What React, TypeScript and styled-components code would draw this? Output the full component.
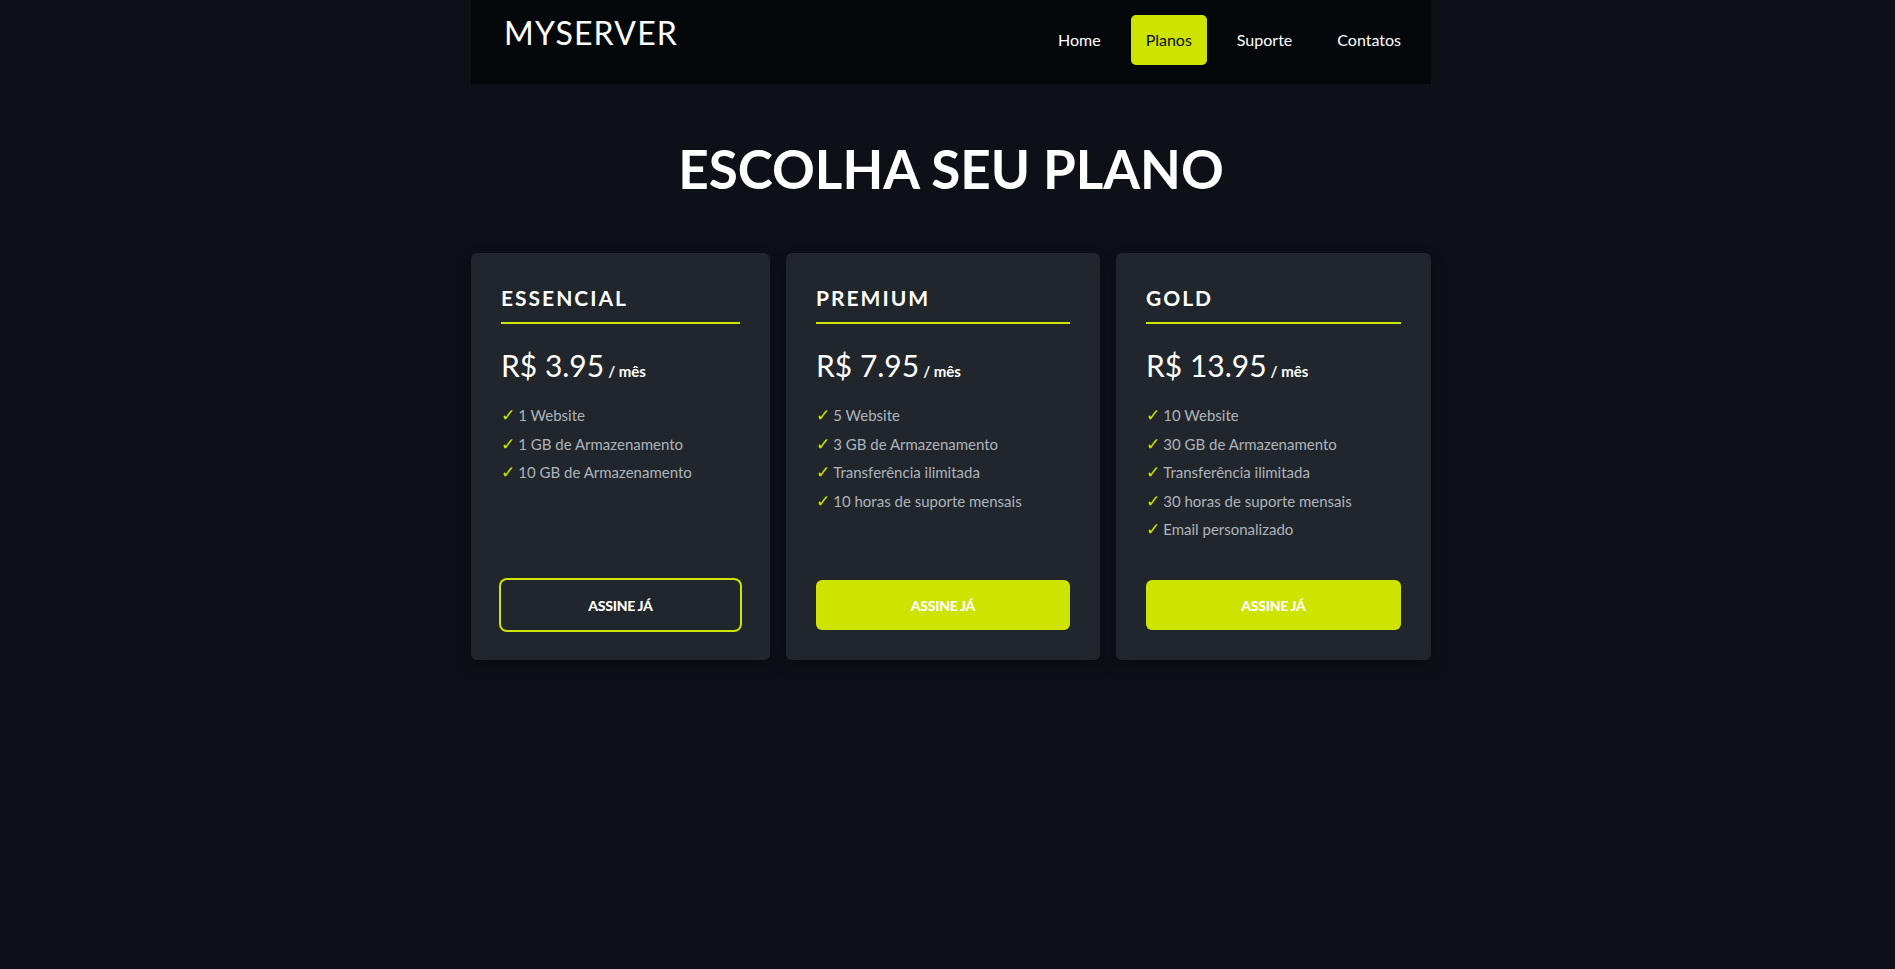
import React from "react";
import styled, { createGlobalStyle } from "styled-components";

const Global = createGlobalStyle`
  html, body { margin: 0; padding: 0; }
  body {
    background: #0d1117;
    color: #ffffff;
    font-family: Lato, "Noto Sans", sans-serif;
    min-height: 969px;
  }
  * { box-sizing: border-box; }
`;

const LIME = "#cde300";

const Page = styled.div`
  padding-left: 7px;
`;

const Container = styled.div`
  width: 960px;
  margin: 0 auto;
`;

const Header = styled.header`
  height: 84px;
  background: #05080b;
  display: flex;
  justify-content: space-between;
  align-items: flex-start;
  padding: 0 15px 0 33px;
`;

const Logo = styled.div`
  padding-top: 11px;
  font-size: 32px;
  line-height: 44px;
  letter-spacing: 1.2px;
  font-weight: 400;
  color: #fff;
`;

const Nav = styled.nav`
  display: flex;
  gap: 15px;
  padding-top: 15px;
`;

const NavLink = styled.a<{ $active?: boolean }>`
  display: block;
  height: 50px;
  line-height: 50px;
  padding: 0 15px;
  font-size: 16px;
  border-radius: 5px;
  text-decoration: none;
  color: ${(p) => (p.$active ? "#0d1117" : "#ffffff")};
  background: ${(p) => (p.$active ? LIME : "transparent")};
`;

const Title = styled.h1`
  margin: 48px 0;
  text-align: center;
  font-size: 53px;
  line-height: 73px;
  font-weight: 700;
  color: #fff;
`;

const Cards = styled.div`
  display: grid;
  grid-template-columns: 299px 314px 315px;
  gap: 16px;
`;

const Card = styled.div`
  background: #21262d;
  border-radius: 6px;
  padding: 30px;
  min-height: 407px;
  display: flex;
  flex-direction: column;
  box-shadow: 0 6px 14px rgba(0, 0, 0, 0.35);
`;

const PlanName = styled.h2`
  margin: 0;
  padding: 1px 0 10px;
  font-size: 21px;
  line-height: 28px;
  font-weight: 700;
  letter-spacing: 2px;
  border-bottom: 2px solid ${LIME};
  color: #fff;
`;

const Price = styled.div`
  margin-top: 21px;
  font-size: 30px;
  line-height: 40px;
  color: #fff;
`;

const Per = styled.span`
  font-size: 15px;
  font-weight: 700;
  margin-left: 4px;
`;

const Features = styled.ul`
  list-style: none;
  margin: 10px 0 0;
  padding: 0;
`;

const Feature = styled.li`
  padding: 3px 0;
  font-size: 15px;
  line-height: 22.5px;
  color: #adb4bb;
`;

const Check = styled.span`
  display: inline-block;
  color: ${LIME};
  margin-right: 3px;
  font-family: "DejaVu Sans", sans-serif;
  font-size: 17px;
  line-height: 1;
`;

const Button = styled.button<{ $outline?: boolean }>`
  margin-top: auto;
  width: 100%;
  height: 50px;
  border: none;
  border-radius: 6px;
  font-family: Lato, sans-serif;
  font-size: 14px;
  font-weight: 900;
  letter-spacing: -0.3px;
  color: #fff;
  cursor: pointer;
  background: ${(p) => (p.$outline ? "transparent" : LIME)};
  box-shadow: ${(p) => (p.$outline ? `0 0 0 2px ${LIME}` : "none")};
`;

const plans = [
  {
    name: "ESSENCIAL",
    price: "R$ 3.95",
    outline: true,
    features: ["1 Website", "1 GB de Armazenamento", "10 GB de Armazenamento"],
  },
  {
    name: "PREMIUM",
    price: "R$ 7.95",
    outline: false,
    features: [
      "5 Website",
      "3 GB de Armazenamento",
      "Transferência ilimitada",
      "10 horas de suporte mensais",
    ],
  },
  {
    name: "GOLD",
    price: "R$ 13.95",
    outline: false,
    features: [
      "10 Website",
      "30 GB de Armazenamento",
      "Transferência ilimitada",
      "30 horas de suporte mensais",
      "Email personalizado",
    ],
  },
];

export default function App() {
  return (
    <Page>
      <Global />
      <Container>
        <Header>
          <Logo>MYSERVER</Logo>
          <Nav>
            <NavLink href="#">Home</NavLink>
            <NavLink href="#" $active>
              Planos
            </NavLink>
            <NavLink href="#">Suporte</NavLink>
            <NavLink href="#">Contatos</NavLink>
          </Nav>
        </Header>
        <Title>ESCOLHA SEU PLANO</Title>
        <Cards>
          {plans.map((p) => (
            <Card key={p.name}>
              <PlanName>{p.name}</PlanName>
              <Price>
                {p.price}
                <Per>/ mês</Per>
              </Price>
              <Features>
                {p.features.map((f) => (
                  <Feature key={f}>
                    <Check>✓</Check>
                    {f}
                  </Feature>
                ))}
              </Features>
              <Button $outline={p.outline}>ASSINE JÁ</Button>
            </Card>
          ))}
        </Cards>
      </Container>
    </Page>
  );
}
